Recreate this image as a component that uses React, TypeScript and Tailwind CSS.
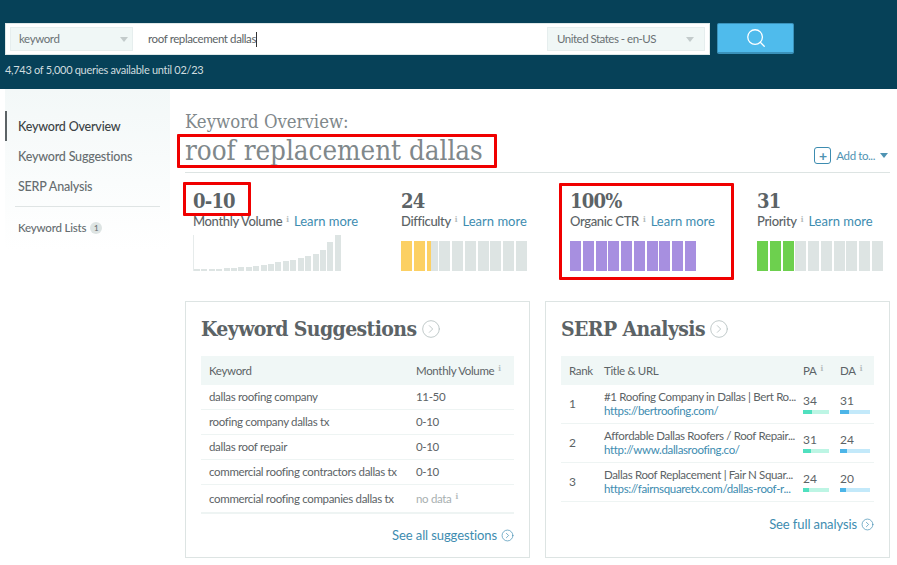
import { CircleChevronRight, Search } from "lucide-react";

const sans = "font-['Lato','Noto_Sans',sans-serif]";
const slab = "font-['DejaVu_Serif','Liberation_Serif',serif] [font-stretch:condensed]";

const volumeBars = [2, 2, 2, 2, 3, 3, 4, 4, 5, 6, 7, 9, 10, 11, 13, 15, 17, 21, 29, 36];

const suggestions = [
  { keyword: "dallas roofing company", volume: "11-50" },
  { keyword: "roofing company dallas tx", volume: "0-10" },
  { keyword: "dallas roof repair", volume: "0-10" },
  { keyword: "commercial roofing contractors dallas tx", volume: "0-10" },
  { keyword: "commercial roofing companies dallas tx", volume: "no data" },
];

const results = [
  { rank: 1, title: "#1 Roofing Company in Dallas | Bert Ro...", url: "https://bertroofing.com/", pa: 34, da: 31 },
  { rank: 2, title: "Affordable Dallas Roofers / Roof Repair...", url: "http://www.dallasroofing.co/", pa: 31, da: 24 },
  { rank: 3, title: "Dallas Roof Replacement | Fair N Squar...", url: "https://fairnsquaretx.com/dallas-roof-r...", pa: 24, da: 20 },
];

function Info() {
  return <sup className={`${slab} ml-1 text-[8px] font-bold text-[#b4bcbc]`}>i</sup>;
}

function Caret({ color = "border-t-[#c3cbcb]" }: { color?: string }) {
  return <span className={`h-0 w-0 border-x-4 border-t-[5px] border-x-transparent ${color}`} />;
}

function Segments({ fills, color }: { fills: number[]; color: string }) {
  return (
    <div className="mt-auto flex h-[30px] w-[126px] justify-between">
      {fills.map((fill, i) => (
        <div key={i} className="h-full w-[11px] bg-[#dde4e3]">
          <div className={`h-full ${color}`} style={{ width: `${fill * 100}%` }} />
        </div>
      ))}
    </div>
  );
}

function Metric({ value, label, width, children }: { value: string; label: string; width: string; children: React.ReactNode }) {
  return (
    <div className={`flex h-[81px] flex-col ${width}`}>
      <div className={`${slab} text-[20px] leading-[22px] font-bold tracking-[-0.8px] text-[#5c6366]`}>{value}</div>
      <div className="mt-[1px] flex items-baseline whitespace-nowrap text-[13px] leading-[17px]">
        <span className="font-medium tracking-[-0.35px] text-[#5c6366]">{label}</span>
        <Info />
        <a className="ml-[5px] text-[#3d8cb0]">Learn more</a>
      </div>
      {children}
    </div>
  );
}

function SectionTitle({ children }: { children: React.ReactNode }) {
  return (
    <h2 className={`${slab} flex h-[26px] items-center gap-[4px] text-[21px] font-bold tracking-[-0.6px] text-[#5c6366]`}>
      {children}
      <CircleChevronRight size={20} strokeWidth={1} className="text-[#b4bfbf]" />
    </h2>
  );
}

function Meter({ value, width, track, fill }: { value: number; width: string; track: string; fill: string }) {
  return (
    <div>
      <div className="text-[12px] leading-[14px] text-[#5c6366]">{value}</div>
      <div className={`mt-[2px] h-[4px] ${width} ${track}`}>
        <div className={`h-full ${fill}`} style={{ width: `${value}%` }} />
      </div>
    </div>
  );
}

export default function App() {
  return (
    <div className={`${sans} relative h-[565px] w-[897px] overflow-hidden bg-white`}>
      <header className="h-[89px] bg-[#064158] pt-[23px] pl-[5px]">
        <div className="flex items-start">
          <div className="flex h-[32px] w-[705px] items-center justify-between border border-[#dfe8e8] bg-white px-[4px]">
            <div className="flex items-center">
              <div className="flex h-[24px] w-[123px] items-center justify-between border border-[#e6eeee] bg-[#f0f7f6] pr-[4px] pl-[8px] text-[11.5px] tracking-[-0.4px] text-[#6a7174]">
                keyword
                <Caret />
              </div>
              <div className="ml-[15px] flex items-center text-[11.5px] tracking-[-0.4px] text-[#5c6366]">
                roof replacement dallas
                <span className="h-[15px] w-px bg-[#333]" />
              </div>
            </div>
            <div className="flex h-[24px] w-[158px] items-center justify-between border border-[#e6eeee] bg-[#f0f7f6] pr-[10px] pl-[9px] text-[11.5px] tracking-[-0.5px] text-[#6a7174]">
              United States - en-US
              <Caret />
            </div>
          </div>
          <button className="ml-[7px] flex h-[31px] w-[77px] items-center justify-center rounded-[2px] border border-b-2 border-[#3a92bb] bg-[#4fbbec]">
            <Search size={22} strokeWidth={1.4} className="text-white" />
          </button>
        </div>
        <p className="mt-[7px] text-[11px] leading-[15px] tracking-[-0.3px] text-[#cfdcdf]">4,743 of 5,000 queries available until 02/23</p>
      </header>

      <div className="flex items-start pl-[5px]">
        <nav className="h-[161px] w-[165px] bg-gradient-to-b from-[#f3f8f8] to-white pt-[22px] text-[12.5px] font-medium tracking-[-0.2px] text-[#666d70]">
          <a className="flex h-[30px] items-center border-l-2 border-[#5c6366] pt-[2px] pl-[11px] text-[#3c4346]">Keyword Overview</a>
          <a className="flex h-[30px] items-center pt-[2px] pl-[13px]">Keyword Suggestions</a>
          <a className="flex h-[30px] items-center pt-[2px] pl-[13px]">SERP Analysis</a>
          <div className="mt-[5px] ml-[10px] w-[145px] border-t border-[#dfe4e4]" />
          <a className="mt-[12px] flex items-center pl-[13px] text-[11.5px]">
            Keyword Lists
            <span className="ml-[4px] flex h-[12px] w-[12px] items-center justify-center rounded-full bg-[#dde4e3] text-[8px]">1</span>
          </a>
        </nav>

        <main className="ml-[15px] w-[705px] pt-[22px]">
          <div className={`${slab} text-[#80888b]`}>
            <h2 className="text-[18.4px] leading-[22px]">Keyword Overview:</h2>
            <div className="flex h-[40px] items-start justify-between border-b border-[#dde4e3] pt-[2px]">
              <h1 className="text-[27.5px] leading-[30px]">roof replacement dallas</h1>
              <div className={`${sans} mt-[12px] flex items-center text-[11.5px] tracking-[-0.4px] text-[#4f93b3] [font-stretch:normal]`}>
                <span className="flex h-[17px] w-[17px] items-center justify-center rounded-[3px] border border-[#3d8cb0] text-[14px] leading-none font-bold">+</span>
                <span className="ml-[5px]">Add to...</span>
                <span className="mr-[2px] ml-[5px] h-0 w-0 border-x-[4px] border-t-[5px] border-x-transparent border-t-[#4f93b3]" />
              </div>
            </div>
          </div>

          <div className="mt-[17px] flex pl-[8px]">
            <Metric value="0-10" label="Monthly Volume" width="w-[208px]">
              <div className="mt-auto flex h-[36px] w-[148px] items-end justify-between border-l border-[#e6ebeb]">
                {volumeBars.map((h, i) => (
                  <div key={i} className="w-[6px] bg-[#dde4e3]" style={{ height: h }} />
                ))}
              </div>
            </Metric>
            <Metric value="24" label="Difficulty" width="w-[169px]">
              <Segments fills={[1, 1, 0.4, 0, 0, 0, 0, 0, 0, 0]} color="bg-[#fcd063]" />
            </Metric>
            <Metric value="100%" label="Organic CTR" width="w-[187px]">
              <Segments fills={[1, 1, 1, 1, 1, 1, 1, 1, 1, 1]} color="bg-[#a78fe0]" />
            </Metric>
            <Metric value="31" label="Priority" width="w-[126px]">
              <Segments fills={[1, 1, 1, 0, 0, 0, 0, 0, 0, 0]} color="bg-[#6dd04e]" />
            </Metric>
          </div>

          <div className="mt-[30px] flex gap-[15px]">
            <section className="h-[257px] w-[345px] border border-[#dde4e3] px-[15px] pt-[14px]">
              <SectionTitle>Keyword Suggestions</SectionTitle>
              <div className="mt-[14px] flex h-[29px] items-center bg-[#f0f7f6] px-[8px] text-[11.5px] tracking-[-0.33px] whitespace-nowrap text-[#5c6366]">
                <span className="w-[207px] shrink-0">Keyword</span>
                <span>Monthly Volume<Info /></span>
              </div>
              {suggestions.map((row, i) => (
                <div
                  key={row.keyword}
                  className={`flex items-center px-[8px] text-[11.5px] tracking-[-0.33px] whitespace-nowrap text-[#5c6366] ${i === 4 ? "h-[29px] border-b-2" : "h-[25px] border-b"} border-[#eef4f3]`}
                >
                  <span className="w-[207px] shrink-0">{row.keyword}</span>
                  {row.volume === "no data" ? (
                    <span className="text-[#a8afb1]">no data<Info /></span>
                  ) : (
                    <span>{row.volume}</span>
                  )}
                </div>
              ))}
              <a className="mt-[12px] flex items-center justify-end gap-[4px] text-[13px] tracking-[-0.1px] text-[#3d8cb0]">
                See all suggestions
                <CircleChevronRight size={13} strokeWidth={1.25} />
              </a>
            </section>

            <section className="h-[257px] w-[345px] border border-[#dde4e3] px-[15px] pt-[14px]">
              <SectionTitle>SERP Analysis</SectionTitle>
              <div className="mt-[14px] flex h-[29px] items-center bg-[#f0f7f6] px-[8px] text-[11.5px] tracking-[-0.33px] whitespace-nowrap text-[#5c6366]">
                <span className="w-[35px] shrink-0">Rank</span>
                <span className="w-[199px] shrink-0">Title &amp; URL</span>
                <span className="w-[37px] shrink-0">PA<Info /></span>
                <span>DA<Info /></span>
              </div>
              {results.map((row) => (
                <div key={row.rank} className="flex h-[39px] items-center border-b border-[#eef4f3] px-[8px] text-[#5c6366]">
                  <span className="w-[35px] shrink-0 text-[12px]">{row.rank}</span>
                  <div className="w-[199px] shrink-0 text-[11.5px] leading-[14px] tracking-[-0.35px] whitespace-nowrap">
                    <div>{row.title}</div>
                    <div className="text-[#3d8cb0]">{row.url}</div>
                  </div>
                  <div className="w-[37px] shrink-0">
                    <Meter value={row.pa} width="w-[26px]" track="bg-[#bdf5e4]" fill="bg-[#50e0bf]" />
                  </div>
                  <Meter value={row.da} width="w-[30px]" track="bg-[#c3e9fa]" fill="bg-[#4cb5e8]" />
                </div>
              ))}
              <a className="mt-[13px] flex items-center justify-end gap-[4px] text-[13px] tracking-[-0.1px] text-[#3d8cb0]">
                See full analysis
                <CircleChevronRight size={13} strokeWidth={1.25} />
              </a>
            </section>
          </div>
        </main>
      </div>

      {/* red annotation boxes drawn over the screenshot */}
      <div className="absolute top-[134px] left-[177px] h-[34px] w-[320px] rounded-[1px] border-[3px] border-[#f00000]" />
      <div className="absolute top-[182px] left-[183px] h-[34px] w-[68px] rounded-[1px] border-[3px] border-[#f00000]" />
      <div className="absolute top-[183px] left-[559px] h-[97px] w-[175px] rounded-[1px] border-[3px] border-[#f00000]" />
    </div>
  );
}
